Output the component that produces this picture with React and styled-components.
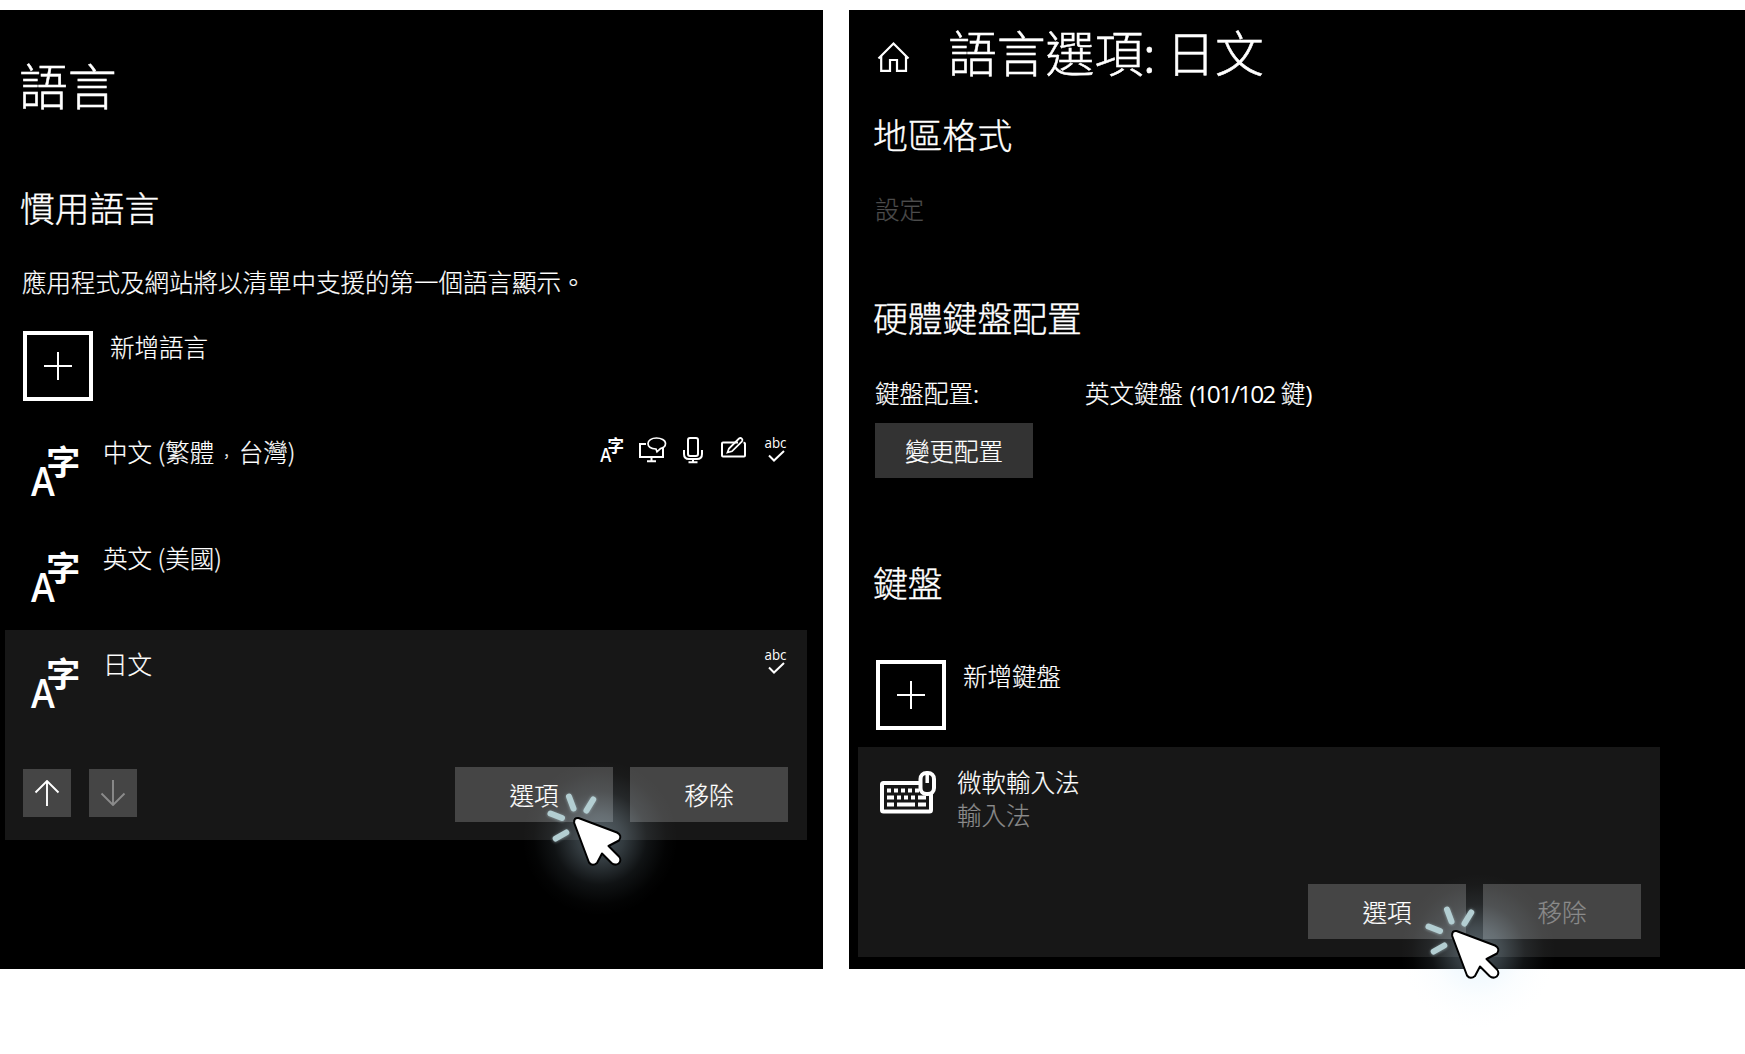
import React from "react";
import styled, { createGlobalStyle } from "styled-components";

const GlobalStyle = createGlobalStyle`
  * { box-sizing: border-box; }
  body {
    margin: 0;
    background: #fff;
    color: #fff;
    font-family: "Noto Sans CJK TC", sans-serif;
    font-weight: 300;
    font-size: 24.5px;
    -webkit-text-stroke: 0.2px currentColor;
    overflow: hidden;
  }
`;

const Page = styled.main`
  position: relative;
  display: flex;
  gap: 26px;
  width: 1745px;
  height: 1054px;
  padding: 10px 0 85px;
  overflow: hidden;
`;

const Panel = styled.section`
  flex: none;
  width: ${(p) => p.$width}px;
  height: 959px;
  padding-top: ${(p) => p.$top}px;
  background: #000;
`;

const TitleBar = styled.header`
  display: flex;
  align-items: flex-start;
  padding-left: ${(p) => p.$left}px;
`;

const Title = styled.h1`
  margin: 0;
  font-size: 48.8px;
  line-height: 60px;
  font-weight: 300;
  white-space: pre;
  -webkit-text-stroke-width: 0.5px;
`;

const Heading = styled.h2`
  margin: ${(p) => p.$gap}px 0 0;
  padding-left: ${(p) => p.$left}px;
  font-size: 34.8px;
  line-height: 40px;
  font-weight: 300;
  -webkit-text-stroke-width: 0.35px;
`;

const Line = styled.p`
  margin: ${(p) => p.$gap || 0}px 0 0;
  padding-left: ${(p) => p.$left || 0}px;
  line-height: 32px;
  white-space: pre;
  color: ${(p) => p.$color || "#fff"};
`;

const Latin = styled.span`
  font-family: "Open Sans", sans-serif;
  font-weight: 400;
  -webkit-text-stroke-width: 0;
  letter-spacing: ${(p) => p.$tight || 0}px;
`;

const Comma = styled.span`
  display: inline-block;
  width: 24.5px;
  font-size: 15px;
  line-height: 20px;
  text-align: center;
`;

const SettingRow = styled.div`
  display: flex;
  margin: 40px 0 0 26px;
`;

const SettingName = styled.div`
  width: 210px;
  line-height: 32px;
`;

const SettingValue = styled.div`
  line-height: 32px;
  white-space: pre;
`;

const AddRow = styled.div`
  display: flex;
  align-items: flex-start;
  gap: 17px;
  margin: ${(p) => p.$gap}px 0 17px ${(p) => p.$left}px;
`;

const AddBox = styled.button`
  display: grid;
  place-items: center;
  width: 70px;
  height: 70px;
  padding: 0;
  border: 4px solid #fff;
  background: #000;
`;

const AddLabel = styled.span`
  line-height: 32px;
`;

const Item = styled.div`
  display: flex;
  flex-direction: column;
  justify-content: space-between;
  width: 802px;
  height: ${(p) => (p.$selected ? 210 : 106)}px;
  margin-left: ${(p) => p.$left}px;
  background: ${(p) => (p.$selected ? "#171717" : "transparent")};
`;

const ItemTop = styled.div`
  display: flex;
  align-items: flex-start;
`;

const ItemIcon = styled.div`
  flex: none;
  display: flex;
  width: ${(p) => p.$width}px;
  padding: ${(p) => p.$pad};
`;

const ItemText = styled.div`
  flex: 1;
  padding-top: ${(p) => p.$top}px;
`;

const Features = styled.div`
  display: flex;
  padding: 17px 19px 0 0;
`;

const ItemFooter = styled.div`
  display: flex;
  align-items: flex-start;
  justify-content: space-between;
  padding: 0 19px 18px 18px;
`;

const Group = styled.div`
  display: flex;
  gap: ${(p) => p.$gap}px;
  margin: ${(p) => p.$top || 0}px 0 0 ${(p) => (p.$end ? "auto" : 0)};
`;

const Button = styled.button`
  display: flex;
  align-items: center;
  justify-content: center;
  width: 158px;
  height: 55px;
  margin: ${(p) => p.$margin || 0};
  padding: 0 0 1px;
  border: 0;
  background: ${(p) => (p.$dark ? "#333" : "#454545")};
  color: ${(p) => (p.disabled ? "#8b8b8b" : "#fff")};
  font: inherit;
`;

const MoveButton = styled.button`
  display: grid;
  place-items: center;
  width: 48px;
  height: 48px;
  padding: 0;
  border: 0;
  background: #454545;
  color: ${(p) => (p.disabled ? "#8b8b8b" : "#fff")};
`;

const Glyphs = styled.svg`
  overflow: visible;
  -webkit-text-stroke-width: 0;
`;

const HomeSvg = styled.svg`
  flex: none;
  margin: 20px 37px 0 0;
`;

const ClickMark = styled.svg`
  position: absolute;
  left: ${(p) => p.$x}px;
  top: ${(p) => p.$y}px;
  pointer-events: none;
`;

const PlusIcon = () => (
  <svg width="28" height="28" viewBox="0 0 28 28">
    <path d="M14 0V28M0 14H28" stroke="#fff" strokeWidth="2" />
  </svg>
);

const LanguageIcon = () => (
  <Glyphs width="50" height="52" viewBox="0 0 50 52" fill="#fff">
    <text transform="translate(0 50.500) scale(.9 1)" fontFamily="Open Sans" fontWeight="600" fontSize="40">A</text>
    <text x="15.300" y="30" fontFamily="Noto Sans CJK TC" fontWeight="700" fontSize="34">字</text>
  </Glyphs>
);

/* Row of small glyphs showing which features a language pack has. */
const FeatureIcons = ({ all }) => (
  <Glyphs width="192" height="30" viewBox="0 0 192 30" fill="none" stroke="#fff" strokeWidth="2">
    {all && (
      <>
        <g fill="#fff" stroke="none">
          <text transform="translate(4.300 27) scale(.88 1)" fontFamily="Open Sans" fontWeight="600" fontSize="19">A</text>
          <text x="11.500" y="17" fontFamily="Noto Sans CJK TC" fontWeight="700" fontSize="16.500">字</text>
        </g>
        <path d="M50 9H44V22H67V13M55.500 22V26M51 26.200H60" />
        <path d="M60.500 3C65 3 69.500 5 69.500 8.500C69.500 11 67.500 12.800 64.500 13.600L61 16.800L60 14C55 13.800 52 11.500 52 8.500C52 5.500 55.500 3 60.500 3Z" strokeWidth="1.700" />
        <rect x="92" y="3" width="10" height="18" rx="2" />
        <path d="M88 15V19Q88 24 93 24H101Q106 24 106 19V15M97 24V27M92.500 27.200H101.500" />
        <path d="M142 7.500H127Q126 7.500 126 8.500V20.500Q126 21.500 127 21.500H148Q149 21.500 149 20.500V8.500Q149 7.800 147.500 7.500" />
        <path d="M131.500 17.500L133 13.500L143 3.500Q144.500 2.500 145.800 3.700Q147 5 146 6.300L136 16.300L131.500 17.500Z" strokeWidth="1.800" />
      </>
    )}
    <text x="168.500" y="12.800" fill="#fff" stroke="none" fontFamily="Open Sans" fontWeight="400" fontSize="14.500" textLength="22" lengthAdjust="spacingAndGlyphs">abc</text>
    <path d="M173 20.500L178 25.500L188 16" />
  </Glyphs>
);

const ArrowIcon = ({ down }) => (
  <svg width="26" height="26" viewBox="0 0 26 26" fill="none" stroke="currentColor" strokeWidth="1.900">
    <path d={down ? "M13 0V25M1.500 13.500L13 25L24.500 13.500" : "M13 26V1M1.500 12.500L13 1L24.500 12.500"} />
  </svg>
);

const HomeIcon = () => (
  <HomeSvg width="34" height="32" viewBox="0 0 34 32" fill="none" stroke="#fff" strokeWidth="2.200">
    <path d="M1.500 17.500L16.500 2.500L31.500 17.500" />
    <path d="M4.200 15V29.800H13V19H20V29.800H29V15" />
  </HomeSvg>
);

const KeyboardIcon = () => (
  <svg width="58" height="44" viewBox="0 0 58 44" fill="none" stroke="#fff">
    <rect x="2" y="12" width="49" height="28.500" rx="1.500" strokeWidth="4" />
    <path d="M7 19.500H39" strokeWidth="4" strokeDasharray="4 3" />
    <path d="M7 26.500H14M17 26.500H21M24 26.500H28M31 26.500H35M38 26.500H46M7 33.500H14M17 33.500H35M38 33.500H46" strokeWidth="4" />
    <rect x="40.500" y="2" width="13.500" height="21" rx="6" fill="#171717" strokeWidth="4" />
    <path d="M47.200 3V12" strokeWidth="3.500" />
  </svg>
);

const ClickCursor = ({ id, x, y }) => (
  <ClickMark $x={x} $y={y} width="160" height="160" viewBox="0 0 160 160">
    <defs>
      <radialGradient id={id}>
        <stop offset="0" stopColor="#c8e8fa" stopOpacity=".36" />
        <stop offset=".3" stopColor="#c8e8fa" stopOpacity=".25" />
        <stop offset=".6" stopColor="#c8e8fa" stopOpacity=".08" />
        <stop offset=".85" stopColor="#c8e8fa" stopOpacity=".015" />
        <stop offset="1" stopColor="#c8e8fa" stopOpacity="0" />
      </radialGradient>
      <filter id={`${id}-blur`} x="-50%" y="-50%" width="200%" height="200%">
        <feGaussianBlur stdDeviation="1.5" />
      </filter>
    </defs>
    <circle cx="80" cy="78" r="78" fill={`url(#${id})`} />
    <g stroke="#b3ced2" strokeWidth="6" strokeLinecap="round">
      <path d="M49 37L53.500 49M73.200 39.500L66.500 50.500M30.500 54L42 58.500M46.300 73L35.700 79" opacity=".6" filter={`url(#${id}-blur)`} />
      <path d="M49 36.500L53.500 48.500M73.200 39.500L66.500 50.500M30.500 53.500L42 58M46.300 72.500L35.700 78.500" />
    </g>
    <path
      d="M58.500 58L97 72.500Q102.500 75.500 99 80.500L88.500 86L99 96.500Q102 100.500 98.700 103.500Q95 106 91.500 103L82 93.500L77 103Q72.500 106.800 69 102.500L54.200 63Q53.500 57.500 58.500 58Z"
      fill="#fff"
      stroke="#000"
      strokeWidth="2"
      strokeLinejoin="round"
    />
  </ClickMark>
);

const languages = [
  { key: "zh", name: <>中文 (繁體<Comma>，</Comma>台灣)</>, all: true, features: true },
  { key: "en", name: <>英文 (美國)</> },
  { key: "ja", name: <>日文</>, features: true, selected: true },
];

const LanguageItem = ({ name, all, features, selected }) => (
  <Item $left={5} $selected={selected}>
    <ItemTop>
      <ItemIcon $width={98} $pad="27px 0 0 26px">
        <LanguageIcon />
      </ItemIcon>
      <ItemText $top={18}>
        <Line>{name}</Line>
      </ItemText>
      {features && (
        <Features>
          <FeatureIcons all={all} />
        </Features>
      )}
    </ItemTop>
    {selected && (
      <ItemFooter>
        <Group $gap={18} $top={2}>
          <MoveButton><ArrowIcon /></MoveButton>
          <MoveButton disabled><ArrowIcon down /></MoveButton>
        </Group>
        <Group $gap={17}>
          <Button>選項</Button>
          <Button>移除</Button>
        </Group>
      </ItemFooter>
    )}
  </Item>
);

export default function App() {
  return (
    <Page lang="zh-TW">
      <GlobalStyle />
      <Panel $width={823} $top={44}>
        <TitleBar $left={19}>
          <Title>語言</Title>
        </TitleBar>
        <Heading $gap={73} $left={20}>慣用語言</Heading>
        <Line $gap={39} $left={22}>應用程式及網站將以清單中支援的第一個語言顯示。</Line>
        <AddRow $gap={33} $left={23}>
          <AddBox><PlusIcon /></AddBox>
          <AddLabel>新增語言</AddLabel>
        </AddRow>
        {languages.map(({ key, ...item }) => (
          <LanguageItem key={key} {...item} />
        ))}
      </Panel>

      <Panel $width={896} $top={11}>
        <TitleBar $left={28}>
          <HomeIcon />
          <Title>語言選項: 日文</Title>
        </TitleBar>
        <Heading $gap={33} $left={24}>地區格式</Heading>
        <Line $gap={39} $left={26} $color="#4c4c4c">設定</Line>
        <Heading $gap={72} $left={24}>硬體鍵盤配置</Heading>
        <SettingRow>
          <SettingName>鍵盤配置:</SettingName>
          <SettingValue>
            英文鍵盤<Latin> </Latin><Latin $tight={-1.9}>(101/102</Latin><Latin> </Latin>鍵<Latin>)</Latin>
          </SettingValue>
        </SettingRow>
        <Button $dark $margin="13px 0 0 26px">變更配置</Button>
        <Heading $gap={84} $left={24}>鍵盤</Heading>
        <AddRow $gap={58} $left={27}>
          <AddBox><PlusIcon /></AddBox>
          <AddLabel>新增鍵盤</AddLabel>
        </AddRow>
        <Item $left={9} $selected>
          <ItemTop>
            <ItemIcon $width={99} $pad="24px 0 0 22px">
              <KeyboardIcon />
            </ItemIcon>
            <ItemText $top={19}>
              <Line>微軟輸入法</Line>
              <Line $gap={1} $color="#8b8b8b">輸入法</Line>
            </ItemText>
          </ItemTop>
          <ItemFooter>
            <Group $gap={17} $end>
              <Button>選項</Button>
              <Button disabled>移除</Button>
            </Group>
          </ItemFooter>
        </Item>
      </Panel>

      <ClickCursor id="glow-language" x={520} y={760} />
      <ClickCursor id="glow-keyboard" x={1398} y={873} />
    </Page>
  );
}
